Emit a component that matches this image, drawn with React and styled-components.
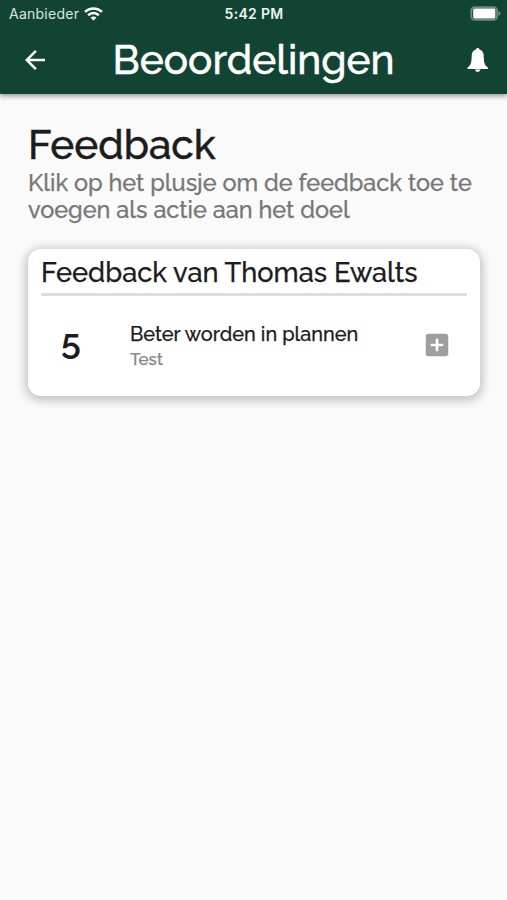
import React from "react"
import styled, { createGlobalStyle } from "styled-components"
import { MdArrowBack, MdAddBox } from "react-icons/md"

const GlobalStyle = createGlobalStyle`
  * {
    box-sizing: border-box;
  }
  body {
    margin: 0;
    background: #fafafa;
    color: #1c1c1c;
    font-family: Raleway, Lato, sans-serif;
    font-weight: 500;
    font-variant-numeric: lining-nums;
    -webkit-text-stroke: 0.25px;
  }
`

const Page = styled.div`
  min-height: 900px;
  background: #fafafa;
`

const Header = styled.header`
  height: 94px;
  background: #124434;
  color: #fff;
  box-shadow: 0 2px 5px rgba(0, 0, 0, 0.42);
`

const StatusBar = styled.div`
  display: grid;
  grid-template-columns: 1fr auto 1fr;
  align-items: center;
  height: 27px;
  padding: 0 6px 0 7px;
  font-family: Inter, sans-serif;
  font-size: 14px;
  line-height: 27px;
  -webkit-text-stroke: 0;
`

const Carrier = styled.div`
  display: flex;
  align-items: center;
  gap: 5px;
  padding-left: 2px;
  font-weight: 400;
  letter-spacing: 0.25px;
  color: #dbe4e1;
`

const Time = styled.div`
  font-weight: 600;
  letter-spacing: 0.3px;
  color: #eef3f1;
`

const Battery = styled.svg`
  justify-self: end;
`

const NavBar = styled.div`
  display: grid;
  grid-template-columns: 30px 1fr 36px;
  align-items: center;
  height: 66px;
  padding: 0 14px 0 20px;
`

const IconButton = styled.button`
  display: flex;
  justify-content: center;
  justify-self: end;
  width: 30px;
  padding: 0;
  border: 0;
  background: none;
  color: ${(props) => props.$color || "#fff"};
  font-size: 30px;
`

const NavTitle = styled.h1`
  margin: 0;
  font-size: 40.6px;
  font-weight: 500;
  line-height: 48px;
  text-align: center;
  -webkit-text-stroke: 0.5px;
`

const Content = styled.main`
  padding: 27px 27px 0 28px;
`

const Title = styled.h2`
  margin: 0;
  font-size: 40.5px;
  font-weight: 500;
  line-height: 48px;
  -webkit-text-stroke: 0.5px;
`

const Subtitle = styled.p`
  margin: 0;
  color: #777;
  font-size: 23.45px;
  line-height: 27px;
`

const Card = styled.section`
  height: 147px;
  margin-top: 26px;
  padding: 7px 13px 0;
  border-radius: 13px;
  background: #fff;
  box-shadow: 0 2px 10px 3px rgba(0, 0, 0, 0.21);
`

const CardTitle = styled.h3`
  margin: 0;
  padding-bottom: 5px;
  border-bottom: 3px solid #dedede;
  font-size: 27.2px;
  font-weight: 500;
  line-height: 32px;
`

const Row = styled.div`
  display: flex;
  align-items: center;
  height: 98px;
  padding-right: 15px;
`

const Score = styled.div`
  width: 60px;
  margin-right: 29px;
  padding-top: 2px;
  font-size: 36px;
  font-weight: 600;
  line-height: 40px;
  text-align: center;
  -webkit-text-stroke: 0;
`

const RowText = styled.div`
  flex: 1;
  padding-top: 2px;
`

const Goal = styled.div`
  font-size: 19.9px;
  line-height: 25px;
`

const Comment = styled.div`
  color: #868686;
  font-size: 17px;
  line-height: 24px;
`

const feedback = [
  { score: 5, goal: "Beter worden in plannen", comment: "Test" },
]

const WifiIcon = () => (
  <svg width="19" height="14" viewBox="0 0 19 14" fill="none" stroke="#fff" strokeWidth="2.6">
    <path d="M1 4.9C5.8.3 13.2.3 18 4.9" />
    <path d="M4.2 8.2c3-2.9 7.6-2.9 10.6 0" />
    <path d="M9.5 13.6 6.6 10.7c1.6-1.5 4.2-1.5 5.8 0z" fill="#fff" stroke="none" />
  </svg>
)

const BatteryIcon = () => (
  <Battery width="31" height="15" viewBox="0 0 31 15">
    <rect x="1.3" y="1.2" width="25.8" height="12.6" rx="3.6" fill="none" stroke="#fff" strokeOpacity="0.38" strokeWidth="1.9" />
    <rect x="3.2" y="2.6" width="22.2" height="9.9" rx="1.5" fill="#fff" />
    <path d="M28.6 5.3c2.3.8 2.3 3.7 0 4.5z" fill="#fff" fillOpacity="0.5" />
  </Battery>
)

const BellIcon = () => (
  <svg width="22" height="25" viewBox="0.3 0.5 22 25" fill="currentColor">
    <path d="M11 .6c-1 0-1.7.7-1.8 1.5C6.6 2.900 5.100 5 5 8c-.1 5-.4 8.300-2.100 10.300C1.900 19.400.7 19.800.7 20.700v.8h20.600v-.8c0-.9-1.200-1.300-2.200-2.400C17.400 16.300 17.100 13 17 8c-.1-3-1.600-5.100-4.200-5.900C12.700 1.300 12 .6 11 .6z" />
    <path d="M8.300 22h5.400c-.3 1.500-1.300 2.300-2.700 2.300S8.600 23.500 8.300 22z" />
  </svg>
)

const App = () => {
  return (
    <React.Fragment>
      <GlobalStyle />
      <Page>
        <Header>
          <StatusBar>
            <Carrier>
              Aanbieder
              <WifiIcon />
            </Carrier>
            <Time>5:42 PM</Time>
            <BatteryIcon />
          </StatusBar>
          <NavBar>
            <IconButton aria-label="Terug">
              <MdArrowBack />
            </IconButton>
            <NavTitle>Beoordelingen</NavTitle>
            <IconButton aria-label="Meldingen">
              <BellIcon />
            </IconButton>
          </NavBar>
        </Header>

        <Content>
          <Title>Feedback</Title>
          <Subtitle>Klik op het plusje om de feedback toe te voegen als actie aan het doel</Subtitle>

          <Card>
            <CardTitle>Feedback van Thomas Ewalts</CardTitle>
            {feedback.map((item) => (
              <Row key={item.goal}>
                <Score>{item.score}</Score>
                <RowText>
                  <Goal>{item.goal}</Goal>
                  <Comment>{item.comment}</Comment>
                </RowText>
                <IconButton $color="#9e9e9e" aria-label="Toevoegen">
                  <MdAddBox />
                </IconButton>
              </Row>
            ))}
          </Card>
        </Content>
      </Page>
    </React.Fragment>
  )
}

export default App
